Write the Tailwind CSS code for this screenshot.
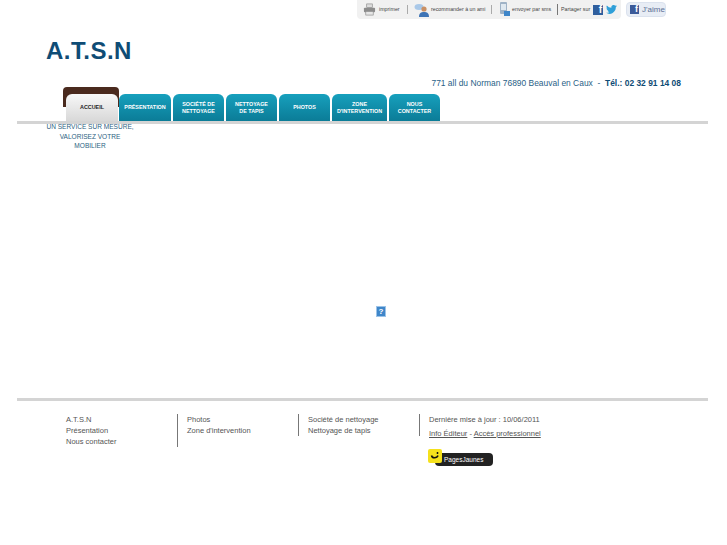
<!DOCTYPE html>
<html lang="fr">
<head>
  <meta charset="UTF-8">
  <title>A.T.S.N</title>
  <script src="https://cdn.jsdelivr.net/npm/@tailwindcss/browser@4"></script>
</head>
<body class="bg-white font-['Liberation_Sans',Arial,sans-serif] w-[727px] h-[545px] overflow-hidden">
<div class="mx-[17px] w-[691px]">
  <!-- barre de partage -->
  <div class="flex justify-end items-start h-[38px] pr-[42px]">
    <div class="flex items-center h-[19px] w-[264px] bg-[#f1f1f1] rounded-b-sm pl-[6px] text-[5.3px] text-[#444] whitespace-nowrap">
      <svg class="w-[13px] h-[13px] mr-[3px]" viewBox="0 0 14 14"><rect x="4" y="1" width="6" height="4" fill="#ddd" stroke="#888" stroke-width=".7"/><rect x="1" y="5" width="12" height="5" rx="1" fill="#8c8c8c"/><rect x="3" y="9" width="8" height="4" fill="#e6e6e6" stroke="#888" stroke-width=".7"/></svg>
      <span class="w-[28px]">imprimer</span>
      <span class="w-px h-[9px] bg-[#aaa] mr-[6px]"></span>
      <svg class="w-[15px] h-[14px] mr-[2px]" viewBox="0 0 15 14"><ellipse cx="5" cy="4" rx="4.5" ry="3" fill="#a9c8e8"/><circle cx="10" cy="6" r="2.6" fill="#c98f63"/><path d="M5 14c0-4 2-5 5-5s5 1 5 5z" fill="#3f74b5"/></svg>
      <span class="w-[60px]">recommander à un ami</span>
      <span class="w-px h-[9px] bg-[#aaa] mr-[7px]"></span>
      <svg class="w-[11px] h-[15px] mr-[2px]" viewBox="0 0 11 15"><rect x="1" y="0" width="7" height="12" rx="1" fill="#9fb2c6"/><rect x="2" y="2" width="5" height="6" fill="#dfe8f0"/><rect x="5" y="9" width="6" height="5" fill="#3f86c9"/></svg>
      <span class="w-[45px]">envoyer par sms</span>
      <span class="w-px h-[11px] bg-[#777] mr-[3px]"></span>
      <span class="w-[32px]">Partager sur</span>
      <span class="w-[10px] h-[10px] bg-[#2f5f9e] mr-[3px] flex items-end justify-end pr-px text-[10px] leading-[10px] font-bold text-white">f</span>
      <svg class="w-[11px] h-[9px]" viewBox="0 0 24 20"><path d="M24 2.4a10 10 0 0 1-2.8.8A5 5 0 0 0 23.3.5a10 10 0 0 1-3.1 1.2 4.9 4.9 0 0 0-8.4 4.5A14 14 0 0 1 1.7.9a4.9 4.9 0 0 0 1.5 6.6 5 5 0 0 1-2.2-.6 4.9 4.9 0 0 0 3.9 4.9 5 5 0 0 1-2.2.1 4.9 4.9 0 0 0 4.6 3.4A10 10 0 0 1 0 17.4 14 14 0 0 0 21.5 5a10 10 0 0 0 2.5-2.6z" fill="#2f9fd8"/></svg>
    </div>
    <div class="flex items-center gap-[3px] ml-[5px] mt-[2px] w-[40px] h-[15px] bg-[#e8edf5] border border-[#dbe2ee] rounded-sm pl-[3px] text-[8px] text-[#5b6f94]">
      <span class="w-[9px] h-[9px] bg-[#3b5a99] flex items-end justify-end pr-px text-[9px] leading-[9px] font-bold text-white">f</span>
      <span>J'aime</span>
    </div>
  </div>

  <!-- en-tête -->
  <div class="pl-[29px] h-[26px]">
    <h1 class="text-[24px] leading-[25px] font-bold text-[#0f4c75] tracking-[0.45px]">A.T.S.N</h1>
  </div>
  <div class="flex justify-end pr-[27px] pt-[13px] h-[23px] text-[8.45px] leading-[12px] text-[#2a5f87] whitespace-pre">
    <span>771 all du Norman 76890 Beauval en Caux  -  </span><b class="text-[#0f4c75]">Tél.: 02 32 91 14 08</b>
  </div>

  <!-- menu -->
  <div class="relative h-[37px] pl-[49px] flex items-end gap-[2px] border-b-[3px] border-[#d4d4d4] text-[5.4px] leading-[7px] font-bold text-white text-center">
    <div class="absolute left-[46px] top-0 w-[56px] h-[20px] bg-[#4a2a1e] rounded-t-sm"></div>
    <div class="relative w-[52px] h-[27px] mr-[-1px] flex items-center justify-center bg-gradient-to-b from-[#f8f8f8] to-[#d8d8d8] rounded-t-md text-[#222]">ACCUEIL</div>
    <div class="relative w-[52px] h-[27px] flex items-center justify-center bg-gradient-to-b from-[#17a0bd] to-[#0b7c97] rounded-t-md">PRÉSENTATION</div>
    <div class="w-[51px] h-[27px] flex items-center justify-center bg-gradient-to-b from-[#17a0bd] to-[#0b7c97] rounded-t-md">SOCIÉTÉ DE<br>NETTOYAGE</div>
    <div class="w-[51px] h-[27px] flex items-center justify-center bg-gradient-to-b from-[#17a0bd] to-[#0b7c97] rounded-t-md">NETTOYAGE<br>DE TAPIS</div>
    <div class="w-[51px] h-[27px] flex items-center justify-center bg-gradient-to-b from-[#17a0bd] to-[#0b7c97] rounded-t-md">PHOTOS</div>
    <div class="w-[55px] h-[27px] flex items-center justify-center bg-gradient-to-b from-[#17a0bd] to-[#0b7c97] rounded-t-md">ZONE<br>D'INTERVENTION</div>
    <div class="w-[51px] h-[27px] flex items-center justify-center bg-gradient-to-b from-[#17a0bd] to-[#0b7c97] rounded-t-md">NOUS<br>CONTACTER</div>
  </div>

  <!-- slogan et image manquante -->
  <div class="h-[274px] relative flow-root">
    <p class="w-[100px] ml-[23px] text-center text-[6.55px] leading-[9.5px] mt-[-2px] text-[#2c5f82]">UN SERVICE SUR MESURE,<br>VALORISEZ VOTRE<br>MOBILIER</p>
    <div class="absolute left-[359px] top-[182px] w-[10px] h-[11px] bg-[#3f86c9] border border-[#9cc3e8] flex items-center justify-center text-[8px] leading-none font-bold text-white">?</div>
  </div>

  <!-- pied de page -->
  <div class="border-t-[3px] border-[#d4d4d4] pt-[13px] pl-[49px] flex items-start text-[7.5px] leading-[11px] text-[#555]">
    <div class="w-[111px] h-[33px]"><p>A.T.S.N</p><p>Présentation</p><p>Nous contacter</p></div>
    <div class="w-[121px] h-[33px] border-l border-[#777] pl-[9px]"><p>Photos</p><p>Zone d'intervention</p></div>
    <div class="w-[121px] h-[22px] border-l border-[#777] pl-[9px]"><p>Société de nettoyage</p><p>Nettoyage de tapis</p></div>
    <div>
      <div class="border-l border-[#777] pl-[9px] h-[22px]">
        <p>Dernière mise à jour : 10/06/2011</p>
        <p class="mt-[3px]"><a class="underline">Info Éditeur</a> - <a class="underline">Accès professionnel</a></p>
      </div>
      <div class="relative ml-[9px] mt-[13px] h-[17px] w-[66px]">
        <div class="absolute left-[7px] top-[4px] w-[58px] h-[13px] bg-[#222] rounded-sm text-[6.5px] leading-[13px] text-white pl-[9px]">PagesJaunes</div>
        <svg class="absolute left-0 top-0 w-[14px] h-[14px]" viewBox="0 0 14 14"><rect width="14" height="14" rx="2" fill="#f5e11c"/><path d="M3.5 6.5c.6 3 5.4 3 6.5 0M9.5 3v2" fill="none" stroke="#111" stroke-width="1.5"/></svg>
      </div>
    </div>
  </div>
</div>
</body>
</html>
